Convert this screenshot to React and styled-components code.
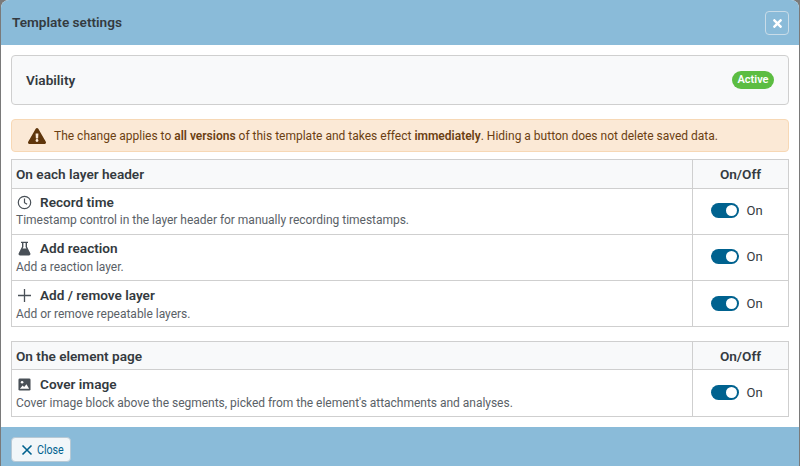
import React from "react";
import styled, { createGlobalStyle } from "styled-components";
import { FaTimes, FaExclamationTriangle } from "react-icons/fa";

const GlobalStyle = createGlobalStyle`
  html, body { margin: 0; padding: 0; height: 100%; background: #7a7a7a; overflow: hidden; }
  body { font-family: Roboto, "Liberation Sans", sans-serif; color: #343a40; }
`;

const Dialog = styled.div`
  width: 798px;
  height: 466px;
  margin-left: 1px;
  display: flex;
  flex-direction: column;
  background: #fff;
  border-radius: 8px 8px 0 0;
  overflow: hidden;
`;

const Header = styled.header`
  height: 45px;
  flex: none;
  display: flex;
  align-items: center;
  justify-content: space-between;
  padding: 1px 10px 0 11px;
  box-sizing: border-box;
  background: #8abbd9;
`;

const Title = styled.h1`
  margin: 0 0 2px;
  font-size: 13.6px;
  font-weight: 600;
  color: #343a40;
`;

const CloseIcon = styled.button`
  width: 24px;
  height: 24px;
  padding: 0;
  display: flex;
  align-items: center;
  justify-content: center;
  color: #fff;
  font-size: 13px;
  background: transparent;
  border: 1px solid #c9dce8;
  border-radius: 4px;
`;

const Body = styled.main`
  flex: 1;
  padding: 10px 10px 0;
`;

const Card = styled.section`
  height: 50px;
  box-sizing: border-box;
  display: flex;
  align-items: center;
  justify-content: space-between;
  padding: 0 14px;
  background: #f8f9fa;
  border: 1px solid #cfcfcf;
  border-radius: 4px;
`;

const CardTitle = styled.span`
  font-size: 13.6px;
  font-weight: 600;
`;

const Badge = styled.span`
  padding: 2px 5.5px;
  font-size: 11px;
  line-height: 14px;
  font-weight: 600;
  color: #fff;
  background: #5cbd42;
  border-radius: 9px;
`;

const Alert = styled.div`
  height: 33px;
  box-sizing: border-box;
  margin: 14px 0 7px;
  display: flex;
  align-items: center;
  gap: 8px;
  padding: 0 17px 0 16px;
  font-size: 12px;
  color: #6b3f12;
  background: #fbe9d6;
  border: 1px solid #f7d8b5;
  border-radius: 4px;
  svg { font-size: 18px; color: #5f360c; flex: none; }
  b { font-weight: 600; }
`;

const Table = styled.div`
  display: grid;
  grid-template-columns: 1fr 96px;
  border: 1px solid #cfcfcf;
  border-bottom: 0;
  margin-bottom: ${(p) => p.$gap}px;
`;

const HeadCell = styled.div`
  height: ${(p) => p.$height}px;
  box-sizing: border-box;
  display: flex;
  align-items: center;
  justify-content: ${(p) => (p.$center ? "center" : "flex-start")};
  padding: 0 4px;
  font-size: 13.6px;
  font-weight: 600;
  background: #f8f9fa;
  border-bottom: 1px solid #cfcfcf;
  border-left: ${(p) => (p.$center ? "1px solid #cfcfcf" : "0")};
`;

const NameCell = styled.div`
  height: ${(p) => p.$height}px;
  box-sizing: border-box;
  padding: ${(p) => p.$top}px 4px 0;
  border-bottom: 1px solid #cfcfcf;
`;

const RowTitle = styled.div`
  display: flex;
  align-items: center;
  gap: 8px;
  height: 16px;
  font-size: 13.6px;
  font-weight: 600;
`;

const IconSlot = styled.span`
  width: 16px;
  box-sizing: border-box;
  padding-left: 1px;
  display: flex;
  justify-content: center;
  color: #495057;
`;

const RowText = styled.div`
  margin-top: ${(p) => p.$gap}px;
  font-size: 12px;
  letter-spacing: -0.02px;
  line-height: 16px;
  color: #5a6167;
`;

const ToggleCell = styled.div`
  height: ${(p) => p.$height}px;
  box-sizing: border-box;
  display: flex;
  align-items: center;
  justify-content: center;
  gap: 7px;
  padding: 0 7px ${(p) => p.$lift}px 0;
  font-size: 13px;
  border-left: 1px solid #cfcfcf;
  border-bottom: 1px solid #cfcfcf;
`;

const Switch = styled.span`
  width: 28px;
  height: 15px;
  display: flex;
  align-items: center;
  justify-content: flex-end;
  padding-right: 2px;
  box-sizing: border-box;
  background: #00628f;
  border-radius: 8px;
  &::after {
    content: "";
    width: 11px;
    height: 11px;
    background: #fff;
    border-radius: 50%;
  }
`;

const Footer = styled.footer`
  height: 39px;
  flex: none;
  display: flex;
  align-items: flex-start;
  padding: 10px 10px 0;
  box-sizing: border-box;
  background: #8abbd9;
`;

const CloseButton = styled.button`
  height: 25px;
  width: 60px;
  padding: 0 0 0 2px;
  display: flex;
  align-items: center;
  justify-content: center;
  gap: 4px;
  font-family: inherit;
  color: #00628f;
  background: #f1f6f9;
  border: 1px solid #b7c9d5;
  border-radius: 4px;
`;

const CloseLabel = styled.span`
  display: inline-block;
  width: 26px;
  font-size: 13px;
  transform: scaleX(0.82);
  transform-origin: left center;
`;

const ClockIcon = () => (
  <svg width="15" height="15" viewBox="0 0 15 15" fill="none" stroke="currentColor" strokeWidth="1.2">
    <circle cx="7.5" cy="7.5" r="6.2" />
    <path d="M7.5 3.6v4.1l2.6 1.6" />
  </svg>
);

const FlaskIcon = () => (
  <svg width="13" height="15" viewBox="0 0 13 15">
    <path fill="#495057" d="M3 .8h7v1.3H9v3.6l3.3 6.6c.5 1 -.2 2.2 -1.3 2.2H2c-1.1 0 -1.8 -1.2 -1.3 -2.2L4 5.7V2.1H3z" />
    <path fill="#fff" d="M5.4 2.1h2.2v3.9l.8 1.5H4.6l.8 -1.5z" />
  </svg>
);

const PlusIcon = () => (
  <svg width="15" height="15" viewBox="0 0 15 15" stroke="currentColor" strokeWidth="1.3">
    <path d="M7.5 1v13M1 7.5h13" />
  </svg>
);

const ImageIcon = () => (
  <svg width="13" height="13" viewBox="0 0 14 14">
    <rect x="0.5" y="0.5" width="13" height="13" rx="1.5" fill="#495057" />
    <circle cx="4.4" cy="4.6" r="1.4" fill="#fff" />
    <path fill="#fff" d="M2 11.5l3 -3.4 1.6 1.7 2.5 -3.2 2.9 4.9z" />
  </svg>
);

const CrossIcon = () => (
  <svg width="12" height="12" viewBox="0 0 12 12" stroke="currentColor" strokeWidth="1.6">
    <path d="M1.5 1.5l9 9M10.5 1.5l-9 9" />
  </svg>
);

const sections = [
  {
    title: "On each layer header",
    gap: 14,
    head: 29,
    rows: [
      { icon: <ClockIcon />, name: "Record time", text: "Timestamp control in the layer header for manually recording timestamps.", height: 46, top: 5, textGap: 2, lift: 2 },
      { icon: <FlaskIcon />, name: "Add reaction", text: "Add a reaction layer.", height: 46, top: 5, textGap: 3, lift: 2 },
      { icon: <PlusIcon />, name: "Add / remove layer", text: "Add or remove repeatable layers.", height: 46, top: 6, textGap: 3, lift: 0 },
    ],
  },
  {
    title: "On the element page",
    gap: 0,
    head: 28,
    rows: [
      { icon: <ImageIcon />, name: "Cover image", text: "Cover image block above the segments, picked from the element's attachments and analyses.", height: 47, top: 6, textGap: 3, lift: 2 },
    ],
  },
];

export default function App() {
  return (
    <Dialog>
      <GlobalStyle />
      <Header>
        <Title>Template settings</Title>
        <CloseIcon aria-label="Close"><FaTimes /></CloseIcon>
      </Header>
      <Body>
        <Card>
          <CardTitle>Viability</CardTitle>
          <Badge>Active</Badge>
        </Card>
        <Alert>
          <FaExclamationTriangle />
          <span>
            The change applies to <b>all versions</b> of this template and takes effect <b>immediately</b>. Hiding a button does not delete saved data.
          </span>
        </Alert>
        {sections.map((section) => (
          <Table key={section.title} $gap={section.gap}>
            <HeadCell $height={section.head}>{section.title}</HeadCell>
            <HeadCell $height={section.head} $center>On/Off</HeadCell>
            {section.rows.map((row) => (
              <React.Fragment key={row.name}>
                <NameCell $height={row.height} $top={row.top}>
                  <RowTitle>
                    <IconSlot>{row.icon}</IconSlot>
                    {row.name}
                  </RowTitle>
                  <RowText $gap={row.textGap}>{row.text}</RowText>
                </NameCell>
                <ToggleCell $height={row.height} $lift={row.lift}>
                  <Switch />
                  On
                </ToggleCell>
              </React.Fragment>
            ))}
          </Table>
        ))}
      </Body>
      <Footer>
        <CloseButton><CrossIcon /><CloseLabel>Close</CloseLabel></CloseButton>
      </Footer>
    </Dialog>
  );
}
